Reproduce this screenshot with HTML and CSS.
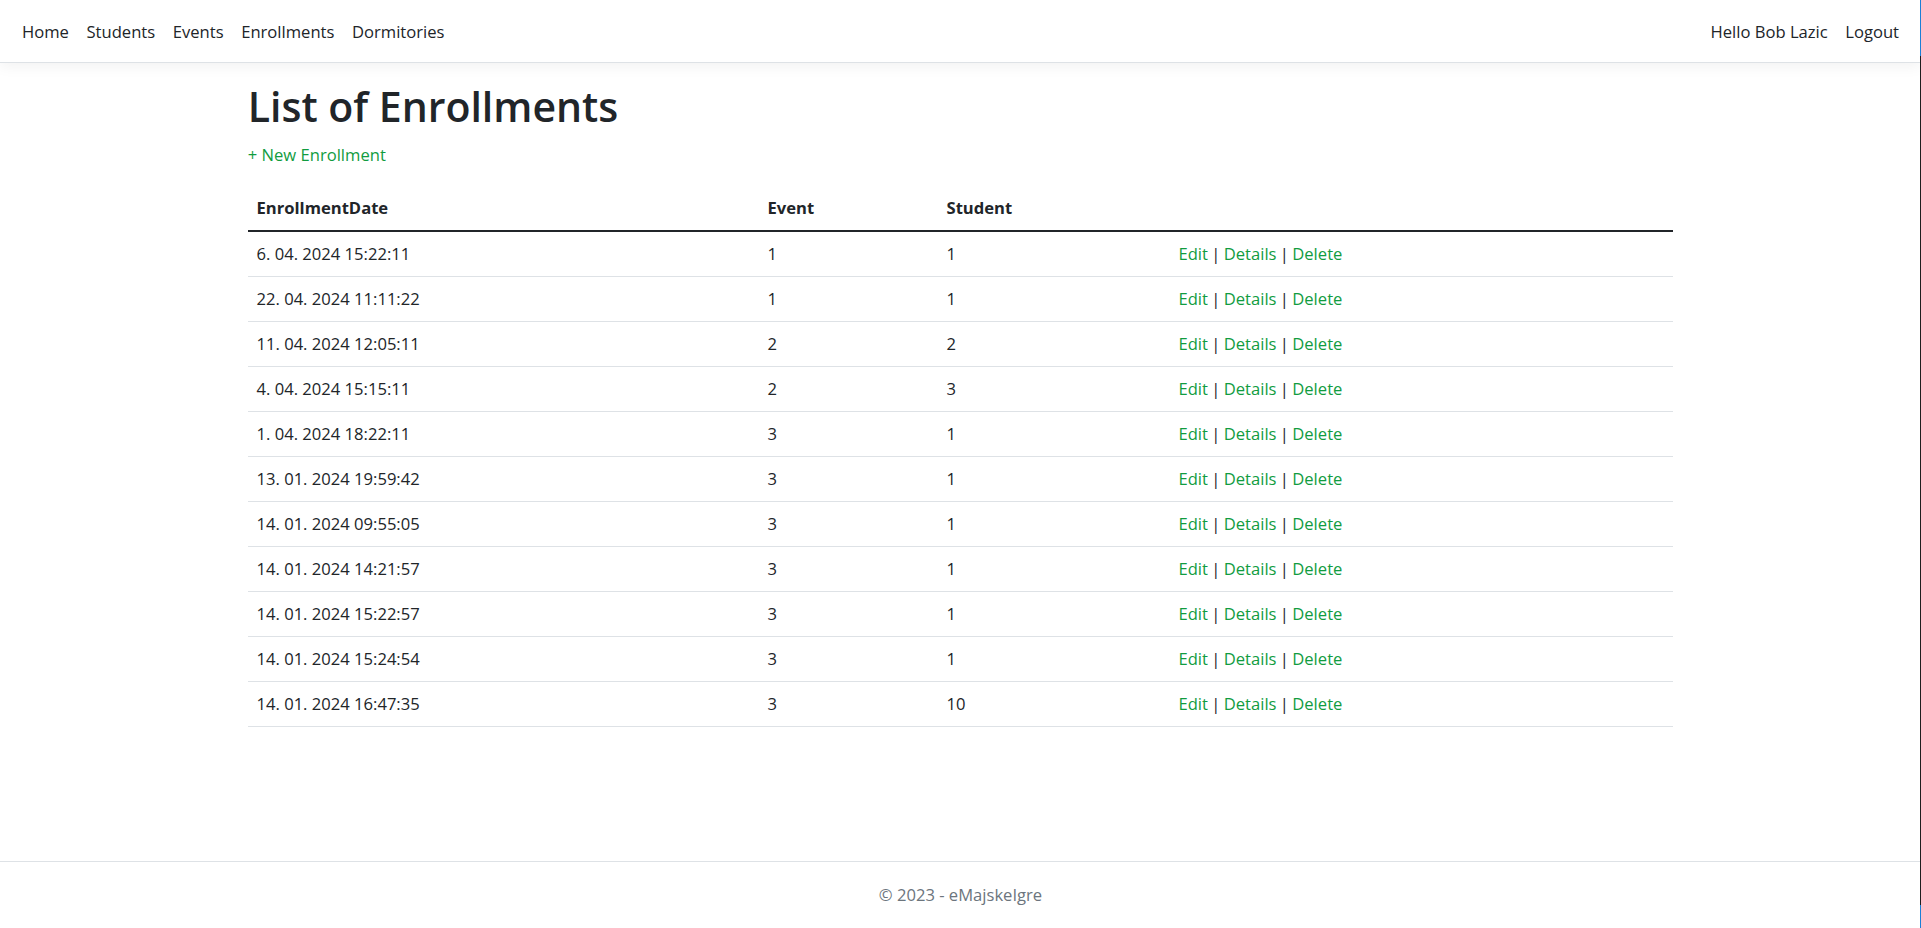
FILE: index.html
```html
<!DOCTYPE html>
<html lang="en">
<head>
<meta charset="utf-8">
<title>List of Enrollments - eMajskeIgre</title>
<link rel="stylesheet" href="styles.css">
</head>
<body>
<header class="navbar">
  <nav class="nav-left">
    <a class="nav-link" href="#">Home</a>
    <a class="nav-link" href="#">Students</a>
    <a class="nav-link" href="#">Events</a>
    <a class="nav-link" href="#">Enrollments</a>
    <a class="nav-link" href="#">Dormitories</a>
  </nav>
  <nav class="nav-right">
    <a class="nav-link" href="#">Hello Bob Lazic</a>
    <a class="nav-link" href="#">Logout</a>
  </nav>
</header>

<main class="container">
  <h1 class="title">List of Enrollments</h1>
  <p class="create"><a class="link" href="#">+ New Enrollment</a></p>
  <table class="table">
    <colgroup>
      <col class="col-date">
      <col class="col-event">
      <col class="col-student">
      <col class="col-actions">
    </colgroup>
    <thead>
      <tr><th>EnrollmentDate</th><th>Event</th><th>Student</th><th></th></tr>
    </thead>
    <tbody>
      <tr><td>6. 04. 2024 15:22:11</td><td>1</td><td>1</td><td class="actions"><a class="link" href="#">Edit</a> | <a class="link" href="#">Details</a> | <a class="link" href="#">Delete</a></td></tr>
      <tr><td>22. 04. 2024 11:11:22</td><td>1</td><td>1</td><td class="actions"><a class="link" href="#">Edit</a> | <a class="link" href="#">Details</a> | <a class="link" href="#">Delete</a></td></tr>
      <tr><td>11. 04. 2024 12:05:11</td><td>2</td><td>2</td><td class="actions"><a class="link" href="#">Edit</a> | <a class="link" href="#">Details</a> | <a class="link" href="#">Delete</a></td></tr>
      <tr><td>4. 04. 2024 15:15:11</td><td>2</td><td>3</td><td class="actions"><a class="link" href="#">Edit</a> | <a class="link" href="#">Details</a> | <a class="link" href="#">Delete</a></td></tr>
      <tr><td>1. 04. 2024 18:22:11</td><td>3</td><td>1</td><td class="actions"><a class="link" href="#">Edit</a> | <a class="link" href="#">Details</a> | <a class="link" href="#">Delete</a></td></tr>
      <tr><td>13. 01. 2024 19:59:42</td><td>3</td><td>1</td><td class="actions"><a class="link" href="#">Edit</a> | <a class="link" href="#">Details</a> | <a class="link" href="#">Delete</a></td></tr>
      <tr><td>14. 01. 2024 09:55:05</td><td>3</td><td>1</td><td class="actions"><a class="link" href="#">Edit</a> | <a class="link" href="#">Details</a> | <a class="link" href="#">Delete</a></td></tr>
      <tr><td>14. 01. 2024 14:21:57</td><td>3</td><td>1</td><td class="actions"><a class="link" href="#">Edit</a> | <a class="link" href="#">Details</a> | <a class="link" href="#">Delete</a></td></tr>
      <tr><td>14. 01. 2024 15:22:57</td><td>3</td><td>1</td><td class="actions"><a class="link" href="#">Edit</a> | <a class="link" href="#">Details</a> | <a class="link" href="#">Delete</a></td></tr>
      <tr><td>14. 01. 2024 15:24:54</td><td>3</td><td>1</td><td class="actions"><a class="link" href="#">Edit</a> | <a class="link" href="#">Details</a> | <a class="link" href="#">Delete</a></td></tr>
      <tr><td>14. 01. 2024 16:47:35</td><td>3</td><td>10</td><td class="actions"><a class="link" href="#">Edit</a> | <a class="link" href="#">Details</a> | <a class="link" href="#">Delete</a></td></tr>
    </tbody>
  </table>
</main>

<footer class="footer">© 2023 - eMajskeIgre</footer>
<div class="window-edge"></div>
</body>
</html>
```

FILE: styles.css
```css
* { box-sizing: border-box; }

html, body { height: 100%; }

body {
  margin: 0;
  font-family: "Open Sans", "Noto Sans", sans-serif;
  font-size: 16.6px;
  line-height: 26.4px;
  color: #212529;
  background: #fff;
  display: flex;
  flex-direction: column;
  min-height: 100vh;
}

.navbar {
  display: flex;
  justify-content: space-between;
  align-items: center;
  padding: 8.8px 13.2px;
  border-bottom: 1px solid #dee2e6;
  box-shadow: 0 4.4px 13.2px rgba(0, 0, 0, 0.05);
  margin-bottom: 17.6px;
  background: #fff;
}

.nav-left, .nav-right { display: flex; }

.nav-link {
  display: block;
  padding: 9.8px 8.8px 7.8px;
  color: #212529;
  text-decoration: none;
}

.container {
  width: 1425.6px;
  margin: 0 auto;
  flex: 1;
  padding-bottom: 17.6px;
}

.title {
  margin: 0 0 8.8px;
  font-size: 41px;
  line-height: 52.8px;
  font-weight: 600;
}

.create { margin: 0 0 17.6px; }

.link {
  color: #119c3f;
  text-decoration: none;
}

.table {
  width: 100%;
  border-collapse: collapse;
  table-layout: fixed;
  margin-bottom: 17.6px;
}

.col-date { width: 511px; }
.col-event { width: 179px; }
.col-student { width: 232px; }

.table th,
.table td {
  padding: 9.3px 8.8px 8.3px;
  text-align: left;
  border-bottom: 1px solid #dee2e6;
}

.table th {
  font-weight: 700;
  vertical-align: bottom;
  border-bottom: 2px solid #212529;
}

.table .actions { word-spacing: -1px; }

.footer {
  border-top: 1px solid #dee2e6;
  line-height: 66px;
  text-align: center;
  color: #6c757d;
  white-space: nowrap;
}

.window-edge {
  position: fixed;
  top: 0;
  right: 0;
  width: 1px;
  height: 100%;
  background: linear-gradient(#1b7fd6 0, #1b7fd6 56px, #1e1e1e 56px, #1e1e1e 905px, #1b7fd6 905px);
}
```
